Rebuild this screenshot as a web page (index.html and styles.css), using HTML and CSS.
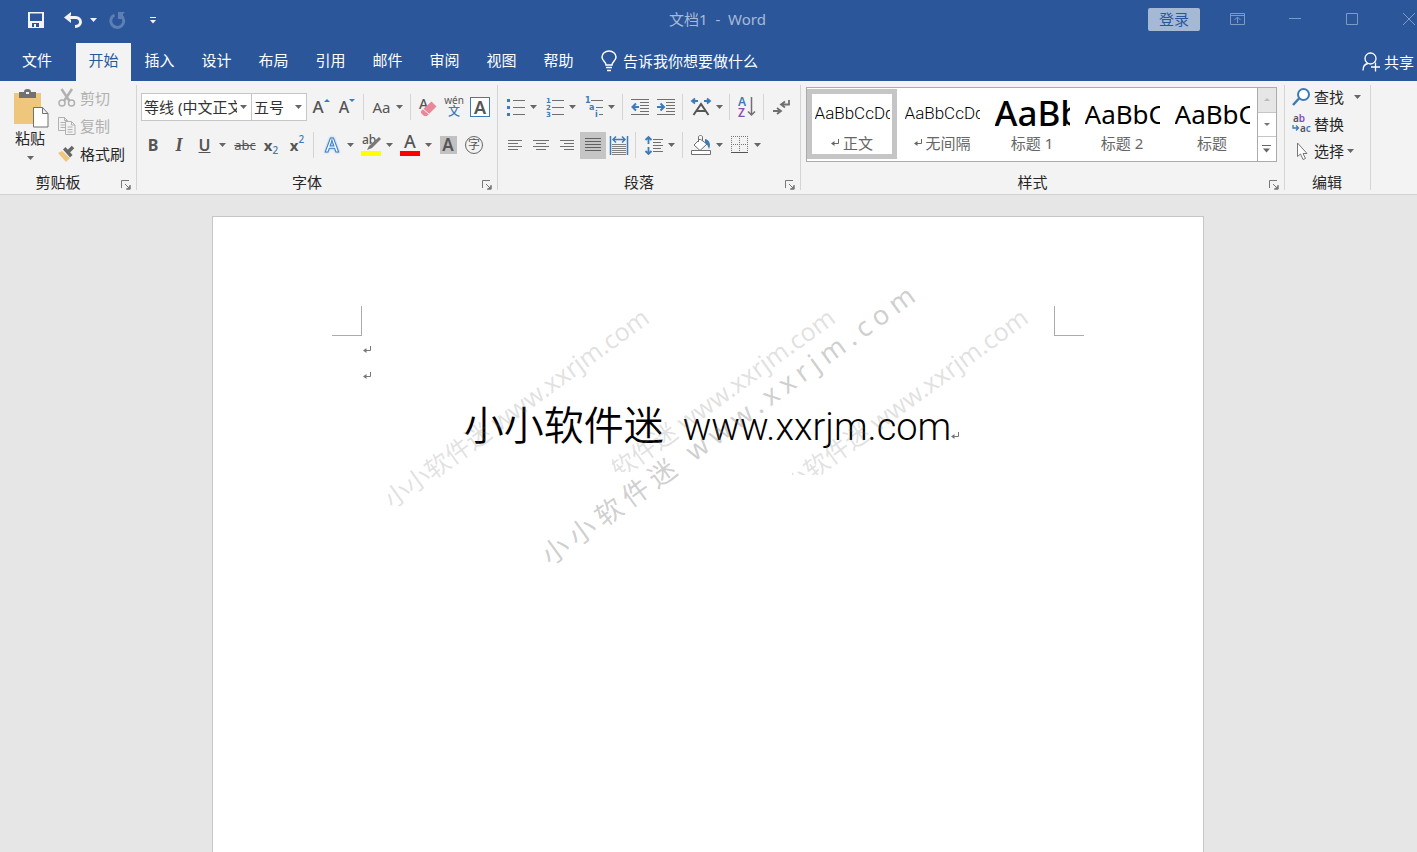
FILE: index.html
```html
<!DOCTYPE html>
<html lang="zh-CN">
<head>
<meta charset="utf-8">
<title>文档1 - Word</title>
<link rel="stylesheet" href="styles.css">
</head>
<body>
<svg class="defs" aria-hidden="true">
  <symbol id="arrow" viewBox="0 0 7 4"><path d="M0 0h7L3.500 4z" fill="currentColor"/></symbol>
  <symbol id="launch" viewBox="0 0 10 10"><path d="M.5 8V.5H8M4 4l4 4M9 5v4H5" fill="none" stroke="#777"/><path d="M9.500 5v4.500H5z" fill="#777"/></symbol>
  <symbol id="ret" viewBox="0 0 8 8"><path d="M7.500 0v4.500H2" fill="none" stroke="currentColor"/><path d="M0 4.500L3.500 2v5z" fill="currentColor"/></symbol>
</svg>
<header class="header">
  <div class="titlebar">
    <div class="quick">
      <button class="qbtn" aria-label="保存"><svg width="16" height="16" viewBox="0 0 16 16"><path fill="#f3f3f3" fill-rule="evenodd" d="M0 0h16v16H0zM2 1.500v7.500h12V1.500zM4 11v4h2v-3h2v3h3v-4z"/></svg></button>
      <button class="qbtn undo" aria-label="撤消"><svg width="18" height="16" viewBox="0 0 18 16"><path d="M2 5.500h9.500c3 0 5 2 5 4.500s-2 4.500-5.500 4.500" fill="none" stroke="#f3f3f3" stroke-width="3"/><path d="M7 0L0 5.500 7 11V8L5 5.500 7 3z" fill="#f3f3f3"/></svg><svg class="arr" width="7" height="4"><use href="#arrow"/></svg></button>
      <button class="qbtn faded" aria-label="重复"><svg width="17" height="17" viewBox="0 0 17 17"><path d="M5.500 3a6.500 6.500 0 1 0 7 1" fill="none" stroke="#5d7fb4" stroke-width="3"/><path d="M9 0h7l-2 2v5h-5z" fill="#5d7fb4"/></svg></button>
      <button class="qbtn more" aria-label="自定义快速访问工具栏"><svg width="6" height="7" viewBox="0 0 6 7"><path d="M0 0h6v1H0zM0 3h6L3 6.500z" fill="#f3f3f3"/></svg></button>
    </div>
    <div class="doctitle">文档1&nbsp; -&nbsp; Word</div>
    <div class="winctl">
      <button class="login">登录</button>
      <button class="win" aria-label="功能区显示选项"><svg width="15" height="12" viewBox="0 0 15 12"><path d="M.5.5h14v11H.5zM1 2.500h13M7.500 10V4.500M4.500 7l3-3 3 3" fill="none" stroke="#7f9bc5"/></svg></button>
      <button class="win" aria-label="最小化"><svg width="12" height="12"><path d="M0 5.500h12" stroke="#7f9bc5"/></svg></button>
      <button class="win" aria-label="最大化"><svg width="12" height="12"><path d="M.5.5h11v11H.5z" fill="none" stroke="#7f9bc5"/></svg></button>
      <button class="win close" aria-label="关闭"><svg width="12" height="12"><path d="M0 0l12 12M12 0L0 12" stroke="#7f9bc5"/></svg></button>
    </div>
  </div>
  <nav class="tabs">
    <button class="tab file">文件</button><button class="tab active">开始</button><button class="tab">插入</button><button class="tab">设计</button><button class="tab">布局</button><button class="tab">引用</button><button class="tab">邮件</button><button class="tab">审阅</button><button class="tab">视图</button><button class="tab">帮助</button>
    <button class="tell"><svg width="16" height="21" viewBox="0 0 16 21"><path d="M5 14c0-3-4-4-4-8a7 6 0 0 1 14 0c0 4-4 5-4 8zM5 16.500h6M6 19.500h4" fill="none" stroke="#fff" stroke-width="1.500"/></svg>告诉我你想要做什么</button>
    <button class="share"><svg width="18" height="20" viewBox="0 0 18 20"><circle cx="8.500" cy="6.500" r="5.500" fill="none" stroke="#fff" stroke-width="1.300"/><path d="M1 18.500c0-4 2-6.500 5-7M13.500 10.500v9M9 15h9" fill="none" stroke="#fff" stroke-width="1.300"/></svg>共享</button>
  </nav>
</header>
<section class="ribbon">
  <div class="group">
    <div class="body clip">
      <button class="paste"><svg class="board" width="35" height="39" viewBox="0 0 35 39"><path fill="#eec77c" d="M0 4h27v31H0z"/><path fill="#717171" d="M5 3h5c0-2 1-3 3.500-3S17 1 17 3h5v6H5z"/><path fill="#f3f3f3" d="M12 3h3v2h-3z"/><path d="M19.500 18.500h9l5.500 6v13.500H19.500zM28.500 18.500v6H34" fill="#fff" stroke="#717171"/></svg><span>粘贴</span><svg class="arr" width="7" height="4"><use href="#arrow"/></svg></button>
      <div class="cliplist">
        <button class="line off"><svg width="18" height="18" viewBox="0 0 18 18"><path d="M3.500 0l8 12M14 0L6 12" stroke="#b1b1b1" stroke-width="2.500"/><g fill="none" stroke="#b1b1b1" stroke-width="1.500"><circle cx="4" cy="14" r="3"/><circle cx="13.500" cy="14" r="3"/></g></svg>剪切</button>
        <button class="line off"><svg width="18" height="18" viewBox="0 0 18 18"><g fill="#f3f3f3" stroke="#b1b1b1"><path d="M.5.5h6l3 3v10h-9zM6.500.500v3h3M2.500 5.500h5M2.500 8h5M2.500 10.500h5"/><path d="M7.500 4.500h6l3.500 3.500v9.500H7.500zM13.500 4.500V8H17M9.500 10h5M9.500 12.500h5M9.500 15h5"/></g></svg>复制</button>
        <button class="line"><svg width="18" height="18" viewBox="0 0 18 18"><path d="M0 8l4-2 8 7-4 4z" fill="#eec77c"/><path d="M5 4.500L7.500 2l7 8-2.500 2.500z" fill="#666"/><path d="M10 7l5-5" stroke="#666" stroke-width="3.500"/><path d="M4.500 5.500l7 7" stroke="#f3f3f3"/></svg>格式刷</button>
      </div>
    </div>
    <div class="glabel">剪贴板<button class="launch" aria-label="剪贴板设置"><svg width="10" height="10"><use href="#launch"/></svg></button></div>
  </div>

  <div class="group">
    <div class="body fbody">
      <div class="row">
        <label class="combo font"><select aria-label="字体"><option>等线 (中文正文)</option></select><svg class="arr" width="7" height="4"><use href="#arrow"/></svg></label>
        <label class="combo size"><select aria-label="字号"><option>五号</option></select><svg class="arr" width="7" height="4"><use href="#arrow"/></svg></label>
        <button class="btn" aria-label="增大字号"><span class="ga big">A</span><svg class="tri" width="6" height="3"><path d="M0 3h6L3 0z" fill="#3c7ab8"/></svg></button>
        <button class="btn" aria-label="缩小字号"><span class="ga">A</span><svg class="tri" width="6" height="3"><path d="M0 0h6L3 3z" fill="#3c7ab8"/></svg></button>
        <i class="sep"></i>
        <button class="btn split"><span class="aa">Aa</span><svg class="arr" width="7" height="4"><use href="#arrow"/></svg></button>
        <i class="sep"></i>
        <button class="btn" aria-label="清除格式"><svg width="20" height="20" viewBox="0 0 20 20"><text x="1" y="12" class="t-ui" font-size="14">A</text><path d="M3 14L13.500 4.500l5 5L9 19H6l-3-3z" fill="#e8889a"/><path d="M5 12l6 5" stroke="#f3f3f3"/></svg></button>
        <button class="btn pinyin"><span>wén</span><b>文</b></button>
        <button class="btn"><span class="boxed">A</span></button>
      </div>
      <div class="row">
        <button class="btn bold">B</button><button class="btn ital">I</button>
        <button class="btn split under"><u>U</u><svg class="arr" width="7" height="4"><use href="#arrow"/></svg></button>
        <button class="btn strike"><s>abc</s></button>
        <button class="btn xs">x<sub>2</sub></button>
        <button class="btn xs">x<sup>2</sup></button>
        <i class="sep"></i>
        <button class="btn split" aria-label="文本效果"><svg width="20" height="24" viewBox="0 0 20 24"><text x="10" y="19" text-anchor="middle" class="glow">A</text></svg><svg class="arr" width="7" height="4"><use href="#arrow"/></svg></button>
        <button class="btn split" aria-label="突出显示"><svg width="20" height="22" viewBox="0 0 20 22"><text x="1" y="10" class="t-ui" font-size="12">ab</text><path d="M18 3l2 2-9 9-5 2 2-4z" fill="#777"/><path d="M0 17h20v5H0z" fill="#ff0"/></svg><svg class="arr" width="7" height="4"><use href="#arrow"/></svg></button>
        <button class="btn split" aria-label="字体颜色"><svg width="20" height="22" viewBox="0 0 20 22"><text x="10" y="14" text-anchor="middle" class="t-ui" font-size="18" font-weight="600">A</text><path d="M0 17h20v5H0z" fill="#f00"/></svg><svg class="arr" width="7" height="4"><use href="#arrow"/></svg></button>
        <button class="btn"><span class="shaded">A</span></button>
        <button class="btn"><span class="circled">字</span></button>
      </div>
    </div>
    <div class="glabel">字体<button class="launch" aria-label="字体设置"><svg width="10" height="10"><use href="#launch"/></svg></button></div>
  </div>

  <div class="group para">
    <div class="body">
      <div class="row">
        <button class="btn split" aria-label="项目符号"><svg width="18" height="18" viewBox="0 0 18 18"><path d="M0 1h3v3H0zM0 8h3v3H0zM0 15h3v3H0z" fill="#3c7ab8"/><path d="M6 2.500h12M6 9.500h12M6 16.500h12" stroke="#707070"/></svg><svg class="arr" width="7" height="4"><use href="#arrow"/></svg></button>
        <button class="btn split" aria-label="编号"><svg width="18" height="20" viewBox="0 0 18 20"><g class="num" font-size="7"><text x="0" y="6">1</text><text x="0" y="13">2</text><text x="0" y="20">3</text></g><path d="M6 3.500h12M6 10.500h12M6 17.500h12" stroke="#707070"/></svg><svg class="arr" width="7" height="4"><use href="#arrow"/></svg></button>
        <button class="btn split" aria-label="多级列表"><svg width="18" height="20" viewBox="0 0 18 20"><g class="num" font-size="8"><text x="0" y="6">1</text><text x="4" y="13">a</text><text x="10" y="20">i</text></g><path d="M6 3.500h12M11 10.500h7M14 17.500h4" stroke="#707070"/></svg><svg class="arr" width="7" height="4"><use href="#arrow"/></svg></button>
        <i class="sep"></i>
        <button class="btn" aria-label="减少缩进"><svg width="18" height="16" viewBox="0 0 18 16"><path d="M0 .5h18M9 3.500h9M9 6.500h9M9 9.500h9M9 12.500h9M0 15.500h18" stroke="#707070"/><path d="M8 8H2M5 4.500L1.500 8 5 11.500" fill="none" stroke="#3c7ab8" stroke-width="2"/></svg></button>
        <button class="btn" aria-label="增加缩进"><svg width="18" height="16" viewBox="0 0 18 16"><path d="M0 .5h18M9 3.500h9M9 6.500h9M9 9.500h9M9 12.500h9M0 15.500h18" stroke="#707070"/><path d="M0 8h6M3.500 4.500L7 8l-3.500 3.500" fill="none" stroke="#3c7ab8" stroke-width="2"/></svg></button>
        <i class="sep"></i>
        <button class="btn split" aria-label="中文版式"><svg width="20" height="18" viewBox="0 0 20 18"><path d="M2.500 17L10 6l7.500 11M5.500 13h9" fill="none" stroke="#555" stroke-width="2"/><path d="M1 3h6M13 3h6M4 .5L1 3l3 2.500M16 .5L19 3l-3 2.500" fill="none" stroke="#3c7ab8" stroke-width="1.800"/></svg><svg class="arr" width="7" height="4"><use href="#arrow"/></svg></button>
        <i class="sep"></i>
        <button class="btn" aria-label="排序"><svg width="18" height="22" viewBox="0 0 18 22"><text x="0" y="10" font-size="12" class="az" fill="#3c7ab8">A</text><text x="0" y="21" font-size="12" class="az" fill="#8a4fb0">Z</text><path d="M13.500 1v18M10 15.500l3.500 3.500 3.500-3.500" fill="none" stroke="#707070" stroke-width="1.500"/></svg></button>
        <i class="sep"></i>
        <button class="btn" aria-label="显示编辑标记"><svg width="17" height="15" viewBox="0 0 17 15"><path d="M16 0v4.500H9M0 11h7M12 1.500l-4 3 4 3M4 8l4 3-4 3" fill="none" stroke="#707070" stroke-width="1.800"/></svg></button>
      </div>
      <div class="row">
        <button class="btn" aria-label="左对齐"><svg width="14" height="12"><path d="M0 1.500h14M0 4.500h10M0 7.500h14M0 10.500h10" stroke="#707070"/></svg></button>
        <button class="btn" aria-label="居中"><svg width="16" height="12"><path d="M0 1.500h16M3 4.500h10M0 7.500h16M3 10.500h10" stroke="#707070"/></svg></button>
        <button class="btn" aria-label="右对齐"><svg width="14" height="12"><path d="M0 1.500h14M4 4.500h10M0 7.500h14M4 10.500h10" stroke="#707070"/></svg></button>
        <button class="btn on" aria-label="两端对齐"><svg width="16" height="14"><path d="M0 .5h16M0 3.500h16M0 6.500h16M0 9.500h16M0 12.500h16" stroke="#606060"/></svg></button>
        <button class="btn" aria-label="分散对齐"><svg width="18" height="19" viewBox="0 0 18 19"><path d="M.5 0v19M17.500 0v19M3 3.500h12M6 .5L3 3.500l3 3M12 .5l3 3-3 3" fill="none" stroke="#3c7ab8" stroke-width="1.500"/><path d="M2 8.500h14M2 10.500h14M2 12.500h14M2 14.500h14M2 16.500h14M2 18.500h14" stroke="#808080"/></svg></button>
        <i class="sep"></i>
        <button class="btn split" aria-label="行距"><svg width="18" height="19" viewBox="0 0 18 19"><path d="M3.500 1v7M3.500 11v7M.5 4l3-3 3 3M.5 15l3 3 3-3" fill="none" stroke="#3c7ab8" stroke-width="1.800"/><path d="M8 3.500h10M8 6.500h8M8 9.500h10M8 12.500h8M8 15.500h10" stroke="#707070"/></svg><svg class="arr" width="7" height="4"><use href="#arrow"/></svg></button>
        <i class="sep"></i>
        <button class="btn split" aria-label="底纹"><svg width="20" height="20" viewBox="0 0 20 20"><path d="M3 10l6-6 7 5-7 6.500zM7.500 7V2c0-2 4-2 4 0v4" fill="#fff" stroke="#707070"/><path d="M14 4c5 1 6 6 4 10-1-3-2-5-4-6z" fill="#3c7ab8"/><path d="M.5 15.500h19v4H.5z" fill="#fff" stroke="#707070"/></svg><svg class="arr" width="7" height="4"><use href="#arrow"/></svg></button>
        <button class="btn split" aria-label="边框"><svg width="18" height="18" viewBox="0 0 18 18"><path d="M.5 0v17M8.500 0v17M16.500 0v17M0 .5h17M0 8.500h17" stroke="#777" stroke-dasharray="1 1"/><path d="M0 16.500h17" stroke="#555"/></svg><svg class="arr" width="7" height="4"><use href="#arrow"/></svg></button>
      </div>
    </div>
    <div class="glabel">段落<button class="launch" aria-label="段落设置"><svg width="10" height="10"><use href="#launch"/></svg></button></div>
  </div>

  <div class="group styles">
    <div class="body gbody">
      <div class="gallery">
        <div class="items">
          <button class="style sel"><span class="pv">AaBbCcDd</span><span class="nm"><svg width="8" height="8"><use href="#ret"/></svg>正文</span></button>
          <button class="style"><span class="pv">AaBbCcDd</span><span class="nm"><svg width="8" height="8"><use href="#ret"/></svg>无间隔</span></button>
          <button class="style"><span class="pv h1">AaBb</span><span class="nm">标题 1</span></button>
          <button class="style"><span class="pv h2">AaBbC</span><span class="nm">标题 2</span></button>
          <button class="style"><span class="pv h2">AaBbC</span><span class="nm">标题</span></button>
        </div>
        <div class="scroll">
          <button class="dim" aria-label="上一行"><svg width="6" height="3"><path d="M0 3h6L3 0z" fill="#bbb"/></svg></button>
          <button aria-label="下一行"><svg width="6" height="3"><path d="M0 0h6L3 3z" fill="#777"/></svg></button>
          <button aria-label="其他"><svg width="9" height="8"><path d="M0 .5h9" stroke="#666"/><path d="M1 3.500h7L4.500 7.500z" fill="#666"/></svg></button>
        </div>
      </div>
    </div>
    <div class="glabel">样式<button class="launch" aria-label="样式设置"><svg width="10" height="10"><use href="#launch"/></svg></button></div>
  </div>

  <div class="group edit">
    <div class="body ebody">
      <button class="line"><svg width="19" height="18" viewBox="0 0 19 18"><circle cx="11.500" cy="6.500" r="5.500" fill="#fff" stroke="#3c7ab8" stroke-width="2"/><path d="M7 10.500L1 17" stroke="#3c7ab8" stroke-width="2.500"/></svg>查找<svg class="arr far" width="7" height="4"><use href="#arrow"/></svg></button>
      <button class="line"><svg width="19" height="20" viewBox="0 0 19 20"><g class="az" font-size="10"><text x="1" y="8" fill="#555">a<tspan fill="#8a4fb0">b</tspan></text><text x="8" y="18" fill="#555">a<tspan fill="#3c7ab8">c</tspan></text></g><path d="M1 11v3h5M4 11.500L6.500 14 4 16.500" fill="none" stroke="#3c7ab8" stroke-width="1.300"/></svg>替换</button>
      <button class="line"><svg width="19" height="18" viewBox="0 0 19 18"><path d="M5.500 1v13.500l3-2.500 2.500 5.500 2.500-1-2.500-5h4z" fill="#fff" stroke="#777"/></svg>选择<svg class="arr near" width="7" height="4"><use href="#arrow"/></svg></button>
    </div>
    <div class="glabel">编辑</div>
  </div>
  <div class="tail"></div>
</section>
<main class="desk">
  <article class="page">
    <div class="corners"><i class="corner l"></i><i class="corner r"></i></div>
    <p class="empty"><svg width="8" height="8"><use href="#ret"/></svg></p>
    <p class="empty"><svg width="8" height="8"><use href="#ret"/></svg></p>
    <h1 class="headline">小小软件迷 <span>www.xxrjm.com</span><svg width="8" height="8"><use href="#ret"/></svg></h1>
    <div class="wm w1"><span>小小软件迷 www.xxrjm.com</span></div>
    <div class="wm w2"><span>小小软件迷 www.xxrjm.com</span></div>
    <div class="wm w3"><span>小小软件迷 www.xxrjm.com</span></div>
    <div class="wm w4"><span>小小软件迷 www.xxrjm.com</span></div>
  </article>
</main>
</body>
</html>
```

FILE: styles.css
```css
* { box-sizing: border-box; }
body {
  margin: 0;
  height: 100vh;
  display: flex;
  flex-direction: column;
  overflow: hidden;
  background: #e6e6e6;
  color: #262626;
  font: 15px/20px "Noto Sans", "Noto Sans CJK SC", sans-serif;
}
button { border: 0; padding: 0; background: none; font: inherit; color: inherit; display: flex; align-items: center; justify-content: center; flex: none; white-space: nowrap; }
svg { flex: none; display: block; overflow: visible; }
.defs { position: absolute; width: 0; height: 0; }
.arr { color: #666; }

.header { background: #2b579a; color: #fff; flex: none; }
.titlebar { display: grid; grid-template-columns: 1fr auto 1fr; height: 43px; }
.quick { display: flex; height: 40px; padding-left: 28px; align-items: center; }
.undo { margin-left: 20px; gap: 8px; }
.quick .arr { color: #f3f3f3; }
.faded { margin-left: 12px; }
.more { margin-left: 24px; }
.doctitle { padding-left: 18px; line-height: 38px; color: #a7bad7; }
.winctl { display: flex; justify-content: flex-end; height: 38px; align-items: center; }
.login { width: 52px; height: 23px; margin-right: 9px; background: #a5b9d5; color: #2b579a; border-radius: 2px; }
.win { width: 57px; height: 38px; }
.close { width: 37px; padding-left: 23px; justify-content: flex-start; }
.tabs { display: flex; height: 38px; }
.tab { width: 57px; padding-bottom: 4px; }
.file { width: 74px; margin-right: 2px; }
.active { width: 55px; background: #f3f3f3; color: #2b579a; }
.tell { margin-left: 14px; gap: 6px; padding-bottom: 2px; }
.share { margin-left: auto; gap: 4px; padding-right: 3px; }

.ribbon { display: flex; flex: none; height: 114px; background: #f3f3f3; border-bottom: 1px solid #d2d2d2; }
.group { display: flex; flex-direction: column; flex: none; position: relative; }
.group::after { content: ""; position: absolute; right: 0; top: 4px; bottom: 4px; width: 1px; background: #d4d4d4; }
.body { flex: 1; display: flex; flex-direction: column; gap: 10px; padding: 12px 5px 0 3px; }
.fbody { padding-right: 5px; }
.row { display: flex; height: 28px; align-items: center; }
.glabel { height: 22px; display: flex; justify-content: center; position: relative; padding-right: 21px; }
.launch { position: absolute; right: 6px; top: 8px; }
.btn { width: 26px; height: 27px; color: #555; }
.split { width: 39px; gap: 5px; }
.on { background: #c5c5c5; }
.sep { width: 1px; height: 26px; margin: 0 4px 0 3px; background: #d4d4d4; }

.clip { flex-direction: row; padding: 7px 12px 0 11px; gap: 9px; }
.paste { flex-direction: column; justify-content: flex-start; align-items: center; width: 38px; padding-top: 1px; }
.board { align-self: flex-end; }
.paste span { margin-bottom: 8px; }
.cliplist { display: flex; flex-direction: column; gap: 8px; }
.line { gap: 4px; justify-content: flex-start; height: 20px; }
.off { color: #b1b1b1; }

.combo { display: flex; align-items: center; height: 28px; background: #fff; border: 1px solid #c6c6c6; padding-right: 4px; }
.combo select { appearance: none; border: 0; background: none; padding: 0 0 0 2px; flex: 1; min-width: 0; height: 24px; color: #333; font: inherit; text-overflow: clip; margin-right: 3px; }
.font { width: 111px; margin-left: 1px; }
.size { width: 56px; margin-left: -1px; margin-right: 1px; }
.ga { font-size: 16px; font-weight: 500; line-height: 24px; }
.big { font-size: 17px; }
.tri { align-self: flex-start; margin-top: 5px; }
.aa { font-size: 15px; }
.t-ui { font-family: "Noto Sans", sans-serif; fill: #555; font-weight: 500; }
.pinyin { flex-direction: column; font-size: 10px; line-height: 10px; }
.pinyin b { color: #3c7ab8; font-size: 12px; line-height: 14px; font-weight: 500; }
.boxed { width: 20px; height: 20px; border: 1px solid #3c7ab8; background: #fff; font-size: 18px; font-weight: 600; line-height: 18px; }
.shaded { width: 17px; height: 18px; background: #c1c1c1; font-size: 17px; font-weight: 600; line-height: 18px; }
.circled { width: 18px; height: 18px; border: 1px solid #666; border-radius: 50%; font-size: 12px; line-height: 15px; }
.bold { font-weight: 700; font-size: 16px; }
.ital { font: italic 700 18px "Liberation Serif", serif; margin-right: 1px; }
.under { font-weight: 600; font-size: 16px; gap: 9px; }
.strike { font-size: 13px; }
.xs { font-weight: 700; align-items: center; }
.xs sub, .xs sup { font-size: 10px; line-height: 10px; color: #3c7ab8; font-weight: 500; }
.xs sub { margin-top: 9px; }
.xs sup { margin-bottom: 13px; }
.glow { font: 600 20px "Noto Sans", sans-serif; fill: #fff; stroke: #3c7fc8; stroke-width: 1px; filter: drop-shadow(0 0 1px #8fb8e6); }
.num { font-family: "DejaVu Sans", sans-serif; font-weight: 700; fill: #3c7ab8; }
.az { font-family: "Noto Sans", sans-serif; font-weight: 600; }
.para .body { padding-left: 4px; padding-right: 7px; }

.styles { flex: 1; min-width: 0; }
.gbody { padding: 6px 8px 0 5px; }
.gallery { display: flex; height: 75px; border: 1px solid #ababab; background: #fff; }
.items { display: flex; flex: 1; min-width: 0; overflow: hidden; padding: 1px 0 2px; }
.style { width: 90px; flex-direction: column; border: 5px solid transparent; padding: 0 2px; justify-content: flex-end; }
.sel { border-color: #c5c5c5; }
.pv { width: 75px; overflow: hidden; text-align: left; font: 300 17px/36px Roboto, sans-serif; color: #000; height: 38px; }
.h1 { font: 500 35px/36px "Noto Sans", sans-serif; }
.h2 { font: 400 26px/38px "Noto Sans", sans-serif; }
.nm { display: flex; align-items: center; gap: 4px; color: #666; padding-bottom: 1px; }
.scroll { width: 19px; display: flex; flex-direction: column; border-left: 1px solid #ababab; }
.scroll button { flex: 1; border-top: 1px solid #c6c6c6; }
.scroll .dim { background: #e6e6e6; border-top: 0; }
.ebody { gap: 7px; padding: 6px 10px 0 7px; }
.edit .line { gap: 3px; }
.edit .glabel { padding-right: 2px; }
.far { margin-left: 7px; }
.tail { width: 46px; flex: none; }

.desk { flex: 1; padding: 21px 22px 0 20px; min-height: 0; }
.page { position: relative; max-width: 992px; height: 100%; margin: 0 auto; padding: 89px 119px 0; background: #fff; border: 1px solid #c6c6c6; border-bottom: 0; }
.corners { display: flex; justify-content: space-between; height: 30px; }
.corner { width: 30px; border-bottom: 1px solid #ababab; }
.l { border-right: 1px solid #ababab; }
.r { border-left: 1px solid #ababab; }
.empty { margin: 0; height: 26px; padding: 10px 0 0 31px; color: #777; }
.headline { margin: 6px 0 0; text-align: center; font: 350 40px/58px "Noto Sans CJK SC", sans-serif; color: #000; white-space: nowrap; }
.headline span { font: 300 38px/58px Roboto, sans-serif; padding-left: 10px; }
.headline svg { display: inline-block; color: #777; margin-right: -8px; }
.wm { position: absolute; overflow: hidden; color: rgba(120, 120, 120, .22); font-size: 25px; line-height: 36px; white-space: nowrap; }
.wm span { position: absolute; bottom: 2px; left: 20px; transform: rotate(-36deg); transform-origin: 0 100%; }
.w1 { left: 164px; top: 80px; width: 290px; height: 221px; }
.w2 { left: 399px; top: 80px; width: 242px; height: 175px; }
.w2 span { left: -29px; bottom: -44px; }
.w3 { left: 579px; top: 80px; width: 260px; height: 178px; }
.w3 span { left: -16px; bottom: -41px; }
.w4 { left: 322px; top: 50px; width: 400px; height: 308px; color: rgba(120, 120, 120, .37); font-size: 27px; letter-spacing: 6px; }
```
